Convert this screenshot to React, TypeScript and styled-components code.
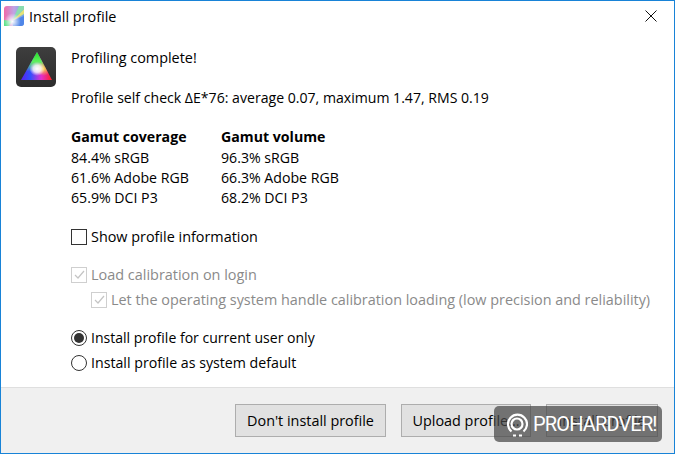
import React from 'react';
import styled, { createGlobalStyle } from 'styled-components';

const Global = createGlobalStyle`
  html, body {
    margin: 0;
    padding: 0;
    background: #fff;
  }
  * {
    box-sizing: border-box;
  }
`;

const Win = styled.div`
  position: relative;
  width: 675px;
  height: 454px;
  display: flex;
  flex-direction: column;
  border: 1px solid #1883d7;
  background: #fff;
  font-family: 'Open Sans', 'Noto Sans', sans-serif;
  font-size: 14.4px;
  color: #000;
  overflow: hidden;
`;

const TitleBar = styled.div`
  height: 30px;
  flex: none;
  display: flex;
  align-items: center;
  padding-left: 3px;
  gap: 5px;
`;

const CloseBtn = styled.div`
  margin-left: auto;
  width: 46px;
  height: 30px;
  display: flex;
  align-items: center;
  justify-content: center;
`;

const Body = styled.div`
  flex: 1;
  display: flex;
  padding: 16px 0 0 15px;
  gap: 15px;
  border-bottom: 1px solid #dfdfdf;
`;

const Content = styled.div`
  display: flex;
  flex-direction: column;
  margin-top: -2px;
`;

const Line = styled.div<{ $mt?: number; $size?: number }>`
  height: 25px;
  line-height: 25px;
  white-space: nowrap;
  margin-top: ${p => p.$mt ?? 0}px;
  font-size: ${p => p.$size ?? 14.4}px;
`;

const Stats = styled.div`
  display: flex;
  gap: 30px;
  margin-top: 17px;
`;

const StatCol = styled.div`
  display: flex;
  flex-direction: column;
  width: 120px;
`;

const StatLine = styled.div<{ $bold?: boolean }>`
  height: ${p => (p.$bold ? 21 : 20)}px;
  line-height: 20px;
  white-space: nowrap;
  font-size: 14.15px;
  font-weight: ${p => (p.$bold ? 700 : 400)};
`;

const Option = styled.div<{ $disabled?: boolean; $indent?: boolean; $mt?: number; $size?: number }>`
  display: flex;
  align-items: center;
  gap: 4px;
  height: 25px;
  white-space: nowrap;
  font-size: ${p => p.$size ?? 14.4}px;
  color: ${p => (p.$disabled ? '#8a8a8a' : '#000')};
  margin-left: ${p => (p.$indent ? 20 : 0)}px;
  margin-top: ${p => p.$mt ?? 0}px;
`;

const CheckBox = styled.div<{ $disabled?: boolean }>`
  width: 16px;
  height: 16px;
  flex: none;
  border: 1px solid ${p => (p.$disabled ? '#cfcfcf' : '#333')};
  background: #fff;
  display: flex;
  align-items: center;
  justify-content: center;
`;

const Radio = styled.div<{ $on?: boolean }>`
  width: 16px;
  height: 16px;
  flex: none;
  border-radius: 50%;
  border: 1px solid #333;
  background: #fff;
  display: flex;
  align-items: center;
  justify-content: center;
  &::after {
    content: '';
    display: ${p => (p.$on ? 'block' : 'none')};
    width: 10px;
    height: 10px;
    border-radius: 50%;
    background: #333;
  }
`;

const Footer = styled.div`
  height: 65px;
  flex: none;
  background: #f0f0f0;
  display: flex;
  justify-content: flex-end;
  align-items: flex-start;
  gap: 15px;
  padding: 16px 16px 0 0;
`;

const Btn = styled.button<{ $w: number }>`
  width: ${p => p.$w}px;
  height: 33px;
  border: 1px solid #adadad;
  background: #e1e1e1;
  font: inherit;
  color: #000;
  padding: 0;
`;

const Watermark = styled.div`
  position: absolute;
  left: 493px;
  top: 405px;
  width: 168px;
  height: 36px;
  border-radius: 5px;
  background: rgba(70, 70, 70, 0.72);
  color: #fff;
  display: flex;
  align-items: center;
  padding-left: 13px;
  gap: 5px;
  font-family: 'Roboto', 'Liberation Sans', sans-serif;
  font-size: 20px;
  letter-spacing: -0.85px;
`;

const Tick = () => (
  <svg width="13" height="13" viewBox="0 0 13 13" fill="none">
    <path d="M2 7l3 3 6-7" stroke="#c4c4c4" strokeWidth="1.2" />
  </svg>
);

const TitleIcon = () => (
  <svg width="20" height="20" viewBox="0 0 20 20">
    <defs>
      <linearGradient id="t1" x1="0" y1="0" x2="1" y2="0">
        <stop offset="0" stopColor="#f06aa8" />
        <stop offset="0.5" stopColor="#c0a4e4" />
        <stop offset="1" stopColor="#6aa8e0" />
      </linearGradient>
      <radialGradient id="t2" cx="0.42" cy="0.78" r="0.42">
        <stop offset="0" stopColor="#fff" />
        <stop offset="1" stopColor="#fff" stopOpacity="0" />
      </radialGradient>
    </defs>
    <rect width="20" height="20" rx="3" fill="url(#t1)" />
    <path d="M0 20V14L8 15L5 20Z" fill="#5ce08a" />
    <path d="M8 15L20 3V8Z" fill="#e2e27a" />
    <path d="M8 15L15 0H20V3Z" fill="#8adcb0" />
    <path d="M8 15L20 10V17A3 3 0 0 1 17 20H9Z" fill="#4f86e8" />
    <rect width="20" height="20" rx="3" fill="url(#t2)" />
  </svg>
);

const AppIcon = () => (
  <svg width="40" height="40" viewBox="0 0 40 40">
    <defs>
      <linearGradient id="a1" x1="0" y1="0" x2="0" y2="1">
        <stop offset="0" stopColor="#3e3e3e" />
        <stop offset="1" stopColor="#2c2c2c" />
      </linearGradient>
      <linearGradient id="a2" x1="0.5" y1="0" x2="0.5" y2="0.7">
        <stop offset="0" stopColor="#20e020" />
        <stop offset="0.5" stopColor="#60f060" />
        <stop offset="1" stopColor="#60f060" stopOpacity="0" />
      </linearGradient>
      <linearGradient id="a3" x1="0" y1="0.5" x2="1" y2="0.5">
        <stop offset="0" stopColor="#5a20f0" />
        <stop offset="0.3" stopColor="#3050ff" />
        <stop offset="0.65" stopColor="#e030d0" />
        <stop offset="1" stopColor="#ff2020" />
      </linearGradient>
      <radialGradient id="a4" cx="0.52" cy="0.6" r="0.25">
        <stop offset="0" stopColor="#fff" />
        <stop offset="0.5" stopColor="#fff" stopOpacity="0.8" />
        <stop offset="1" stopColor="#fff" stopOpacity="0" />
      </radialGradient>
      <radialGradient id="a5" cx="0.72" cy="0.6" r="0.25">
        <stop offset="0" stopColor="#ffd040" />
        <stop offset="1" stopColor="#ffd040" stopOpacity="0" />
      </radialGradient>
    </defs>
    <rect width="40" height="40" rx="5" fill="url(#a1)" />
    <path d="M21 5L36 33H5Z" fill="url(#a3)" />
    <path d="M21 5L36 33H5Z" fill="url(#a2)" />
    <path d="M21 5L36 33H5Z" fill="url(#a5)" />
    <path d="M21 5L36 33H5Z" fill="url(#a4)" />
  </svg>
);

const WatermarkIcon = () => (
  <svg width="21" height="27" viewBox="0 0 21 27" fill="none" stroke="#fff" strokeWidth="2.2">
    <path d="M4.5 20.5A9.5 9.5 0 1 1 16.5 20.5" />
    <circle cx="10" cy="13" r="5.5" />
    <path d="M6 24.5h3M12 24.5h3" />
  </svg>
);

export default function App() {
  return (
    <Win>
      <Global />
      <TitleBar>
        <TitleIcon />
        Install profile
        <CloseBtn>
          <svg width="12" height="12" viewBox="0 0 12 12" stroke="#111" strokeWidth="1">
            <path d="M0.5 0.5l11 11M11.5 0.5l-11 11" />
          </svg>
        </CloseBtn>
      </TitleBar>
      <Body>
        <AppIcon />
        <Content>
          <Line>Profiling complete!</Line>
          <Line $mt={15} $size={14.1}>Profile self check ΔE*76: average 0.07, maximum 1.47, RMS 0.19</Line>
          <Stats>
            <StatCol>
              <StatLine $bold>Gamut coverage</StatLine>
              <StatLine>84.4% sRGB</StatLine>
              <StatLine>61.6% Adobe RGB</StatLine>
              <StatLine>65.9% DCI P3</StatLine>
            </StatCol>
            <StatCol>
              <StatLine $bold>Gamut volume</StatLine>
              <StatLine>96.3% sRGB</StatLine>
              <StatLine>66.3% Adobe RGB</StatLine>
              <StatLine>68.2% DCI P3</StatLine>
            </StatCol>
          </Stats>
          <Option $mt={16}>
            <CheckBox />
            Show profile information
          </Option>
          <Option $disabled $mt={13} $size={14.45}>
            <CheckBox $disabled>
              <Tick />
            </CheckBox>
            Load calibration on login
          </Option>
          <Option $disabled $indent>
            <CheckBox $disabled>
              <Tick />
            </CheckBox>
            Let the operating system handle calibration loading (low precision and reliability)
          </Option>
          <Option $mt={13} $size={14.05}>
            <Radio $on />
            Install profile for current user only
          </Option>
          <Option $size={14.2}>
            <Radio />
            Install profile as system default
          </Option>
        </Content>
      </Body>
      <Footer>
        <Btn $w={151}>Don't install profile</Btn>
        <Btn $w={130}>Upload profile...</Btn>
        <Btn $w={112}>Install profile</Btn>
      </Footer>
      <Watermark>
        <WatermarkIcon />
        PROHARDVER!
      </Watermark>
    </Win>
  );
}
